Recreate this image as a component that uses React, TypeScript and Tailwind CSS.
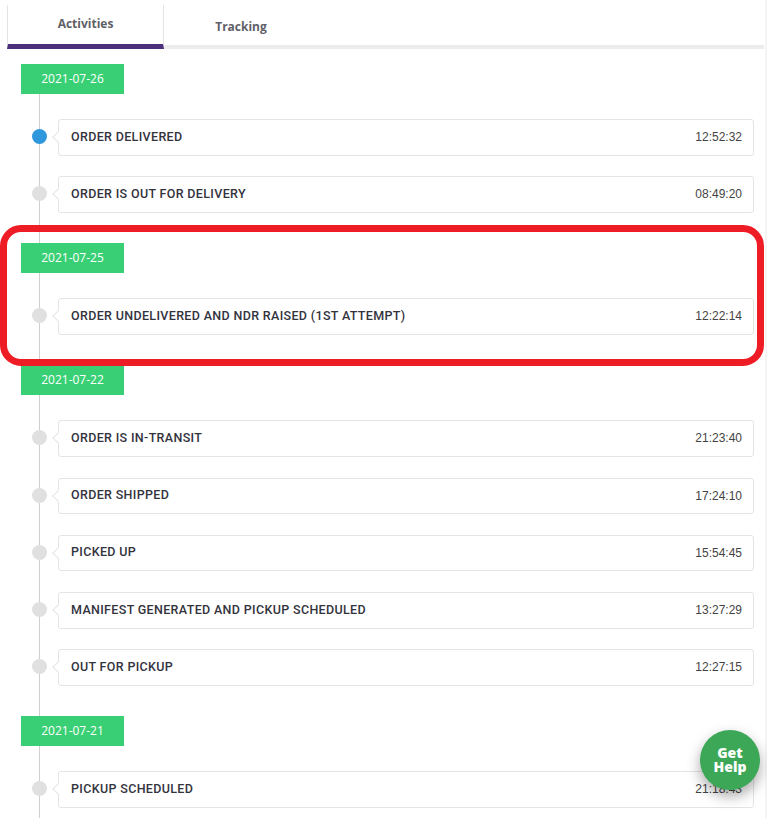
const groups = [
  { date: "2021-07-26", items: [["ORDER DELIVERED", "12:52:32", true], ["ORDER IS OUT FOR DELIVERY", "08:49:20"]] },
  { date: "2021-07-25", items: [["ORDER UNDELIVERED AND NDR RAISED (1ST ATTEMPT)", "12:22:14"]] },
  { date: "2021-07-22", items: [["ORDER IS IN-TRANSIT", "21:23:40"], ["ORDER SHIPPED", "17:24:10"], ["PICKED UP", "15:54:45"], ["MANIFEST GENERATED AND PICKUP SCHEDULED", "13:27:29"], ["OUT FOR PICKUP", "12:27:15"]] },
  { date: "2021-07-21", items: [["PICKUP SCHEDULED", "21:18:43"]] },
] as { date: string; items: [string, string, boolean?][] }[];

function Row({ title, time, active }: { title: string; time: string; active?: boolean }) {
  return (
    <div className="mb-[20.75px] ml-[11px] mr-[13px] flex h-[36.5px] items-center gap-[11px]">
      <span className={`-mt-[1.5px] h-[15px] w-[15px] shrink-0 rounded-full ${active ? "bg-[#2f97db]" : "bg-[#e0e0e0]"}`} />
      <div className="relative flex h-full flex-1 items-center justify-between rounded-[3px] border border-[#e4e4e4] bg-white pb-[0.5px] pl-3 pr-[11px]">
        <span className="absolute left-[-5px] top-[13px] h-2 w-2 rotate-45 border-b border-l border-[#e4e4e4] bg-white" />
        <span className="font-['Roboto',sans-serif] text-[12.5px] font-medium tracking-[0.34px] text-[#33333d]">{title}</span>
        <span className="font-['Liberation_Sans',sans-serif] text-[12px] text-[#444]">{time}</span>
      </div>
    </div>
  );
}

export default function App() {
  return (
    <div className="relative h-[818px] w-[767px] overflow-hidden bg-white">
      <div className="absolute right-0 top-0 h-full w-[2px] bg-[#f4f4f4]" />
      <div className="ml-[7px] mr-[3px] flex h-[49px] border-b-[4px] border-[#ececec] font-['Open_Sans',sans-serif] text-[12px] font-bold text-[#5f5f68]">
        <div className="-mb-1 mt-[5px] flex h-[44px] w-[157px] justify-center border-x border-[#e4e4e4] border-b-[5px] border-b-[#4b2f7c] pt-[10px]">Activities</div>
        <div className="flex w-[154px] justify-center pt-[18px]">Tracking</div>
      </div>
      <div className="relative pt-[15px]">
        <div className="absolute bottom-0 left-[39px] top-[15px] w-px bg-[#cfcfcf]" />
        {groups.map((g) => (
          <div key={g.date} className="relative ml-[21px] pb-[9.75px]">
            <div className="mb-[25px] flex h-[30px] w-[103px] items-center justify-center bg-[#39cf74] font-['Open_Sans',sans-serif] text-[12px] text-white">{g.date}</div>
            {g.items.map(([t, time, a]) => <Row key={t} title={t} time={time} active={a} />)}
          </div>
        ))}
      </div>
      <div className="absolute left-0 top-[225px] h-[141px] w-[764px] rounded-[21px] border-[7px] border-[#ee1c25]" />
      <div className="absolute left-[700px] top-[730px] flex h-[60px] w-[60px] items-center justify-center rounded-full bg-[#3ba757] text-center font-['Open_Sans',sans-serif] text-[14px] font-extrabold leading-[14px] text-white shadow-[0_6px_14px_rgba(0,0,0,0.35)]">Get<br />Help</div>
    </div>
  );
}
